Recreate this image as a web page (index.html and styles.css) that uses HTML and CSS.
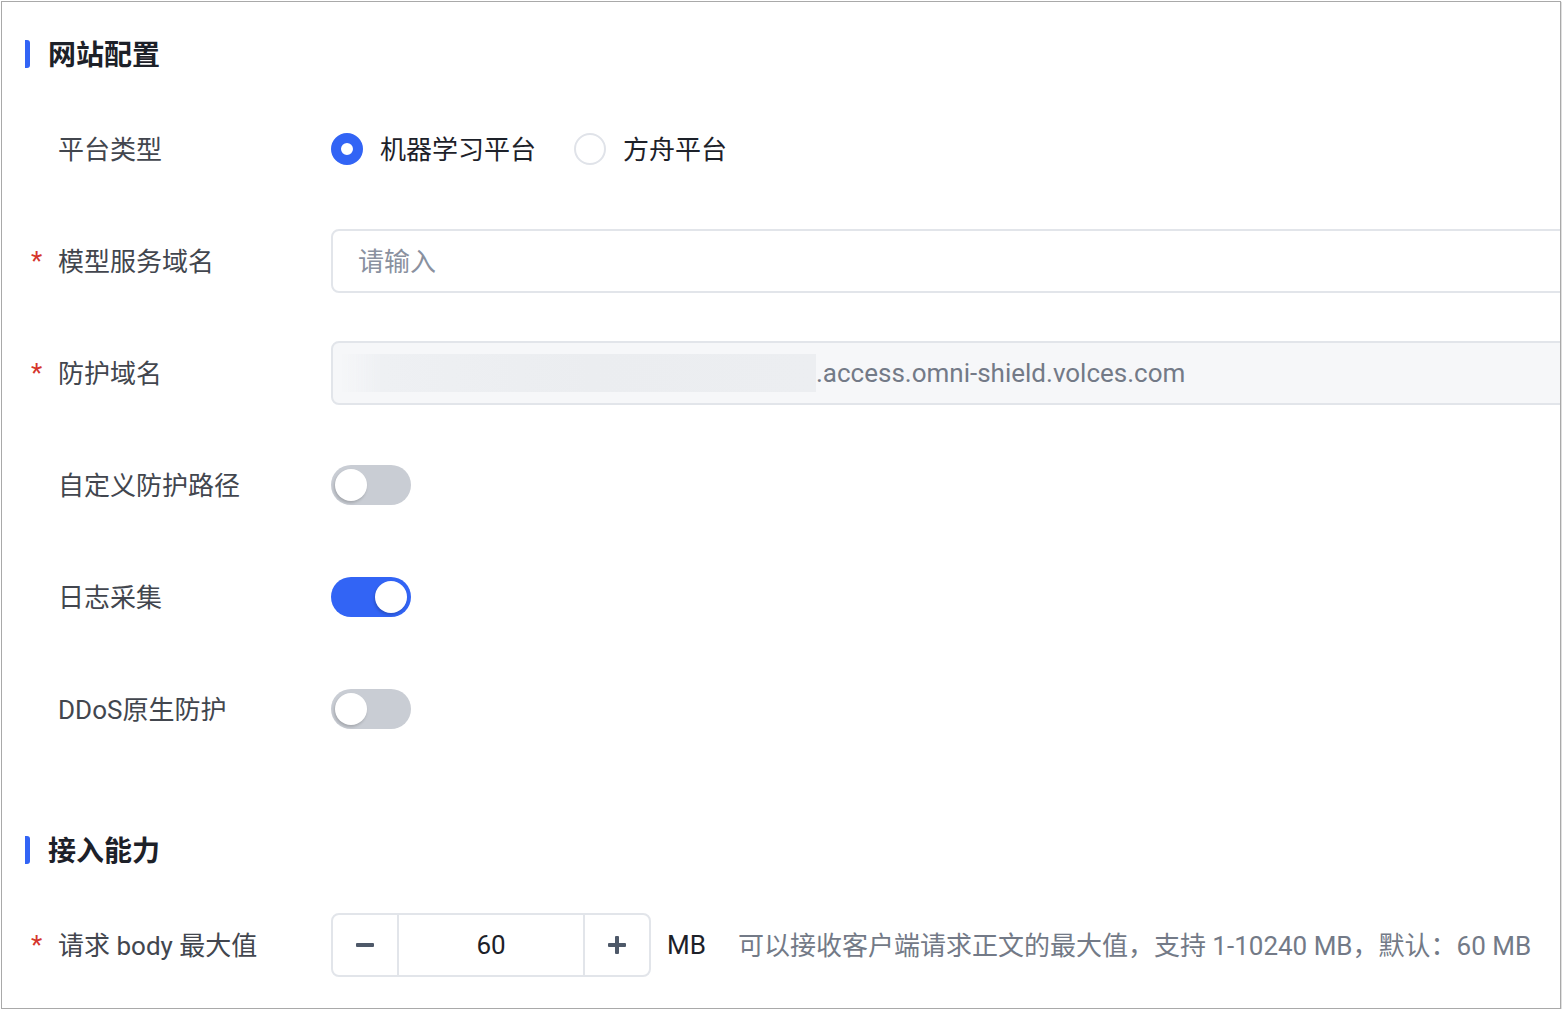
FILE: index.html
```html
<!DOCTYPE html>
<html lang="zh-CN">
<head>
  <meta charset="UTF-8" />
  <meta name="viewport" content="width=device-width, initial-scale=1.0" />
  <title>网站配置</title>
  <link rel="stylesheet" href="styles.css">
</head>
<body>
  <div class="frame">
    <div class="section-title">网站配置</div>

    <div class="form-row">
      <div class="label">平台类型</div>
      <div class="control">
        <label class="radio checked"><span class="dot"></span><span class="text">机器学习平台</span></label>
        <label class="radio"><span class="dot"></span><span class="text">方舟平台</span></label>
      </div>
    </div>

    <div class="form-row">
      <div class="label"><span class="req">*</span>模型服务域名</div>
      <div class="control">
        <div class="input"><span class="placeholder">请输入</span></div>
      </div>
    </div>

    <div class="form-row">
      <div class="label"><span class="req">*</span>防护域名</div>
      <div class="control">
        <div class="input disabled">
          <span class="masked"></span>
          <span class="suffix">.access.omni-shield.volces.com</span>
        </div>
      </div>
    </div>

    <div class="form-row">
      <div class="label">自定义防护路径</div>
      <div class="control"><span class="switch"><span class="knob"></span></span></div>
    </div>

    <div class="form-row">
      <div class="label">日志采集</div>
      <div class="control"><span class="switch on"><span class="knob"></span></span></div>
    </div>

    <div class="form-row">
      <div class="label">DDoS原生防护</div>
      <div class="control"><span class="switch"><span class="knob"></span></span></div>
    </div>

    <div class="section-title second">接入能力</div>

    <div class="form-row">
      <div class="label"><span class="req">*</span>请求 body 最大值</div>
      <div class="control">
        <div class="stepper">
          <span class="step"><span class="minus"></span></span>
          <span class="value">60</span>
          <span class="step"><span class="plus"></span></span>
        </div>
        <span class="unit">MB</span>
        <span class="hint">可以接收客户端请求正文的最大值，支持 1-10240 MB，默认：60 MB</span>
      </div>
    </div>
  </div>
</body>
</html>
```

FILE: styles.css
```css
body { margin: 0; background: #fff; font-family: Roboto, "Noto Sans CJK SC", sans-serif; }
.frame { box-sizing: border-box; width: 1560px; height: 1008px; margin: 1px 0 0 1px; border: 1px solid #a9a9a9; box-shadow: 1px 1px 1px rgba(0,0,0,0.12); overflow: hidden; padding: 38px 0 0 23px; background: #fff; }

.section-title { position: relative; height: 28px; line-height: 32px; padding-left: 23px; font-size: 28px; font-weight: 600; color: #1d2129; margin-bottom: 49px; }
.section-title::before { content: ""; position: absolute; left: 0; top: 0; width: 5px; height: 28px; background: #3264f5; border-radius: 0 3px 3px 0; }
.section-title.second { margin-top: 95px; }

.form-row { display: flex; align-items: center; height: 64px; margin-bottom: 48px; }
.label { width: 306px; flex-shrink: 0; padding-left: 33px; box-sizing: border-box; position: relative; top: -2px; font-size: 26px; color: #42464e; white-space: nowrap; }
.req { position: absolute; left: 6px; top: 5px; color: #d5352c; font-size: 26px; }
.control { display: flex; align-items: center; flex: 1; }

.radio { display: flex; align-items: center; font-size: 26px; color: #1d2129; margin-right: 38px; }
.radio .text { position: relative; top: -2px; }
.radio .dot { width: 32px; height: 32px; box-sizing: border-box; border: 2px solid #e0e3e9; border-radius: 50%; margin-right: 17px; background: #fff; }
.radio.checked .dot { border: 10px solid #3264f5; }

.input { box-sizing: border-box; width: 1260px; height: 64px; border: 2px solid #e2e5ea; border-radius: 8px; display: flex; align-items: center; padding-left: 25px; font-size: 26px; }
.placeholder { color: #8a919f; position: relative; top: -2px; }
.input.disabled { background: #f6f7f9; padding-left: 8px; }
.masked { width: 475px; height: 38px; background: linear-gradient(90deg, rgba(236,238,241,0) 0, #eef0f3 40px, #ebedf0 250px, #eceef1 475px); filter: blur(0.5px); }
.suffix { color: #737a87; }

.switch { position: relative; width: 80px; height: 40px; border-radius: 20px; background: #c9cdd4; }
.switch .knob { position: absolute; left: 4px; top: 4px; width: 32px; height: 32px; border-radius: 50%; background: #fff; box-shadow: -1px 2px 3px rgba(0,0,0,0.18); }
.switch.on { background: #3264f5; }
.switch.on .knob { left: 44px; }

.stepper { display: flex; box-sizing: border-box; width: 320px; height: 64px; border: 2px solid #e2e5ea; border-radius: 8px; }
.step { width: 64px; display: flex; align-items: center; justify-content: center; }
.value { flex: 1; border-left: 2px solid #e2e5ea; border-right: 2px solid #e2e5ea; display: flex; align-items: center; justify-content: center; font-size: 26px; color: #1d2129; }
.minus, .plus { position: relative; width: 18px; height: 4px; background: #4e5969; border-radius: 1px; }
.plus::after { content: ""; position: absolute; left: 7px; top: -7px; width: 4px; height: 18px; background: #4e5969; border-radius: 1px; }
.unit { margin-left: 16px; font-size: 26px; color: #1d2129; }
.hint { margin-left: 32px; font-size: 26px; color: #737a87; white-space: nowrap; position: relative; top: -2px; }
```
